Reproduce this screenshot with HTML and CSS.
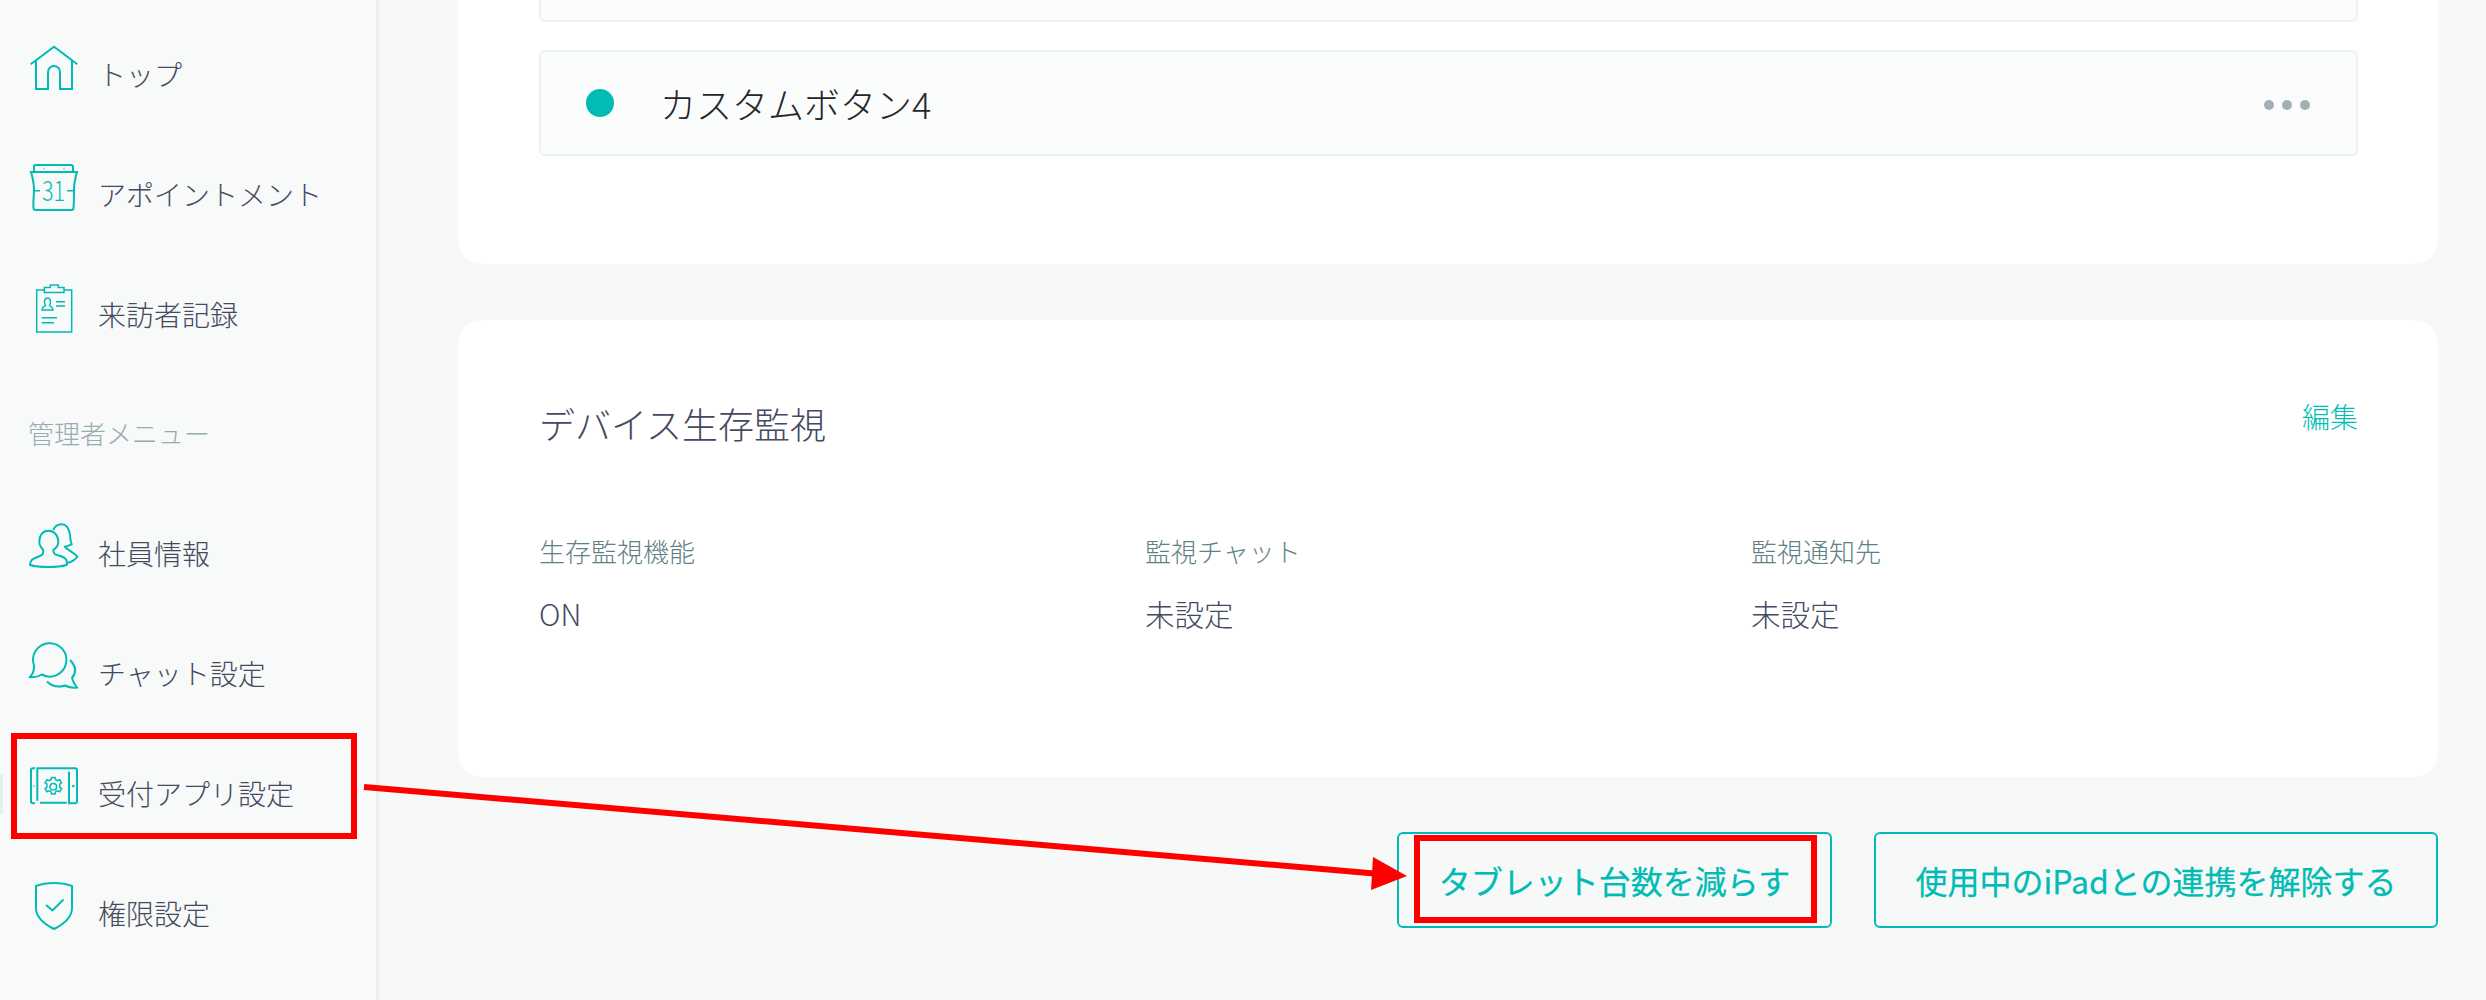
FILE: index.html
```html
<!DOCTYPE html>
<html lang="ja">
<head>
<meta charset="UTF-8">
<title>受付アプリ設定</title>
<link rel="stylesheet" href="styles.css">
</head>
<body>
<div class="page">
  <nav class="sidebar">
    <a class="nav-item">
      <svg class="nav-icon" viewBox="0 0 48 48"><path d="M.7 17.300 24-.3l23.300 17.600M6 14v28h12V25a6 6 0 0 1 12 0v17h12V14"/></svg>
      <span>トップ</span>
    </a>
    <a class="nav-item">
      <svg class="nav-icon" viewBox="0 0 48 48"><path d="M4 5V0a2 2 0 0 1 2-2h35a2 2 0 0 1 2 2v5"/><path d="M1 5h46c-2 7-3 13-3 18 0 6 0 12-.5 18a2 2 0 0 1-2 2H5.500a2 2 0 0 1-2-2C3 35 4 29 4 23 4 18 3 12 1 5Z"/><path class="thin" d="M3.500 23.700H10M37 23.700h6.500M13.500 1.500h1M33.500 1.500h1"/><text class="icon-num" x="23.500" y="34" textLength="23" lengthAdjust="spacingAndGlyphs">31</text></svg>
      <span>アポイントメント</span>
    </a>
    <a class="nav-item">
      <svg class="nav-icon" viewBox="0 0 48 48"><path class="thin" d="M14.300 3H6.700v42h35V3H34M14.300 .5h6V-2h8V.5H34v5H14.300z"/><path class="thin" d="M12 23h11c0-3-2.500-3.500-3.500-4.500 2-3 1-7.500-2-7.500s-4 4.500-2 7.500c-1 1-3.500 1.500-3.500 4.500ZM26 14.700h9M26 19h9M11.700 30.700H27M11.700 35.700H24"/></svg>
      <span>来訪者記録</span>
    </a>
    <div class="nav-heading">管理者メニュー</div>
    <a class="nav-item">
      <svg class="nav-icon" viewBox="0 0 48 48"><path d="M13.300 24c-2-2-4-5-4-8.500C9.300 9 13 4.700 18.300 4.700S28.300 9 28.300 15.500c0 3.500-2 6.500-5 8.500 0 2 .7 3.500 1.700 4.300 4 1.700 10 2 11.500 6 .7 1.700.5 3.500.2 4.700-5 1.500-11 2-18.400 2S5 40.500 0 39c.2-2 .5-3.500 1.700-5 3-2.500 8-3 11-5.700.6-1.300.6-2.800.6-4.300Z"/><path d="M23.300 4c1.500-3.500 5-5.700 8.400-5.700 4.300 0 7.300 4 8.300 10.700.3 4 .5 7 1.700 9.300-1.800 1.500-4.700 1.700-6.700 2.400 1 2.800 9 5 12.300 10-2 3-6 5.300-10.600 6.600"/></svg>
      <span>社員情報</span>
    </a>
    <a class="nav-item">
      <svg class="nav-icon" viewBox="0 0 48 48"><path d="M4.200 20A16.700 16.700 0 1 1 11.700 28.500C8 31 4 31.500 0 31c2-2 4-5 4.200-11Z"/><path d="M40 14c6 6 7 12 2 18 1 4 3 7 5 9.500-4 .5-8 0-12-2-6 2-13 1-18-4"/></svg>
      <span>チャット設定</span>
    </a>
    <a class="nav-item active">
      <svg class="nav-icon" viewBox="0 0 48 48"><path d="M5 2.300H3a2 2 0 0 0-2 2v31a2 2 0 0 0 2 2h2M7.300 34.700V2.300H45a2 2 0 0 1 2 2v31a2 2 0 0 1-2 2h-6V5.700M10 36.700h26.700"/><circle class="fill" cx="43.300" cy="20" r="1.300"/><circle class="fill" cx="4" cy="20" r=".8"/><circle class="thin" cx="23.300" cy="20.700" r="3.300"/><path class="thin" d="M21.500 11.500h3.600l.5 2.200 1.800.9 2.200-1 1.900 3.200-1.800 1.400v3l1.800 1.400-1.900 3.200-2.200-1-1.800.9-.5 2.200h-3.600l-.5-2.200-1.800-.9-2.200 1-1.900-3.200 1.800-1.400v-3l-1.800-1.400 1.900-3.200 2.200 1 1.800-.9z"/></svg>
      <span>受付アプリ設定</span>
    </a>
    <a class="nav-item">
      <svg class="nav-icon" viewBox="0 0 48 48"><path d="M24-3c6.500 0 13 1 18 3v22c0 9-8 16-18 21C14 38 6 31 6 22V0c5-2 11.500-3 18-3Z"/><path d="m16 19 6.500 5.500 11-11"/></svg>
      <span>権限設定</span>
    </a>
  </nav>

  <main class="content">
    <section class="card card-top">
      <div class="custom-row custom-row-cut"></div>
      <div class="custom-row">
        <span class="dot"></span>
        <span class="custom-name">カスタムボタン4</span>
        <span class="more"><i></i><i></i><i></i></span>
      </div>
    </section>

    <section class="card card-monitor">
      <div class="card-head">
        <h2>デバイス生存監視</h2>
        <a class="edit">編集</a>
      </div>
      <div class="fields">
        <div><div class="field-label">生存監視機能</div><div class="field-value">ON</div></div>
        <div><div class="field-label">監視チャット</div><div class="field-value">未設定</div></div>
        <div><div class="field-label">監視通知先</div><div class="field-value">未設定</div></div>
      </div>
    </section>

    <div class="actions">
      <button class="btn btn-reduce">タブレット台数を減らす</button>
      <button class="btn btn-unlink">使用中のiPadとの連携を解除する</button>
    </div>
  </main>
</div>

<!-- annotations drawn over the screenshot -->
<svg class="markup" width="2486" height="1000" viewBox="0 0 2486 1000">
  <rect x="14" y="736" width="340" height="100"/>
  <rect x="1417" y="838" width="397" height="82"/>
  <path d="M364 787 1380 874"/>
  <polygon points="1407,876 1373,857 1371,890"/>
</svg>
</body>
</html>
```

FILE: styles.css
```css
* {
  box-sizing: border-box;
}
html, body {
  margin: 0;
  height: 1000px;
  overflow: hidden;
}
body {
  font-family: "Noto Sans CJK JP", "Noto Sans", sans-serif;
  font-weight: 300;
  background: #f7f8f8;
  color: #444a60;
}
.page {
  display: flex;
  height: 1000px;
}

/* sidebar */
.sidebar {
  width: 379px;
  flex-shrink: 0;
  padding-top: 15px;
  background: #f8f9f9;
  border-right: 3px solid #eceeee;
}
.nav-item {
  position: relative;
  display: flex;
  height: 120px;
  padding: 32px 0 0 30px;
  gap: 20px;
  font-size: 28px;
  line-height: 40px;
}
.nav-item span {
  padding-top: 7px;
}
.nav-item.active::before {
  content: "";
  position: absolute;
  left: 0;
  top: 40px;
  width: 3px;
  height: 40px;
  background: #dff4f2;
}
.nav-icon {
  width: 48px;
  height: 48px;
  flex-shrink: 0;
  overflow: visible;
  fill: none;
  stroke: #00bcb4;
  stroke-width: 2;
}
.nav-icon .thin {
  stroke-width: 1.500;
}
.nav-icon .fill {
  fill: #00bcb4;
  stroke: none;
}
.icon-num {
  fill: #00bcb4;
  stroke: none;
  font-size: 27px;
  font-weight: 300;
  text-anchor: middle;
}
.nav-heading {
  height: 119px;
  padding: 38px 0 0 28px;
  font-size: 26px;
  line-height: 40px;
  color: #97acb1;
}

/* main column */
.content {
  flex: 1;
  padding: 0 48px 0 79px;
}
.card {
  background: #fff;
  border-radius: 24px;
}
.card-top {
  height: 264px;
  padding: 0 80px 0 81px;
  border-radius: 0 0 24px 24px;
}
.custom-row {
  display: flex;
  align-items: center;
  height: 106px;
  padding: 0 46px 0 45px;
  background: #fbfcfc;
  border: 2px solid #e8f4f1;
  border-radius: 6px;
}
.custom-row-cut {
  height: 22px;
  margin-bottom: 28px;
  border-top: 0;
  border-radius: 0 0 6px 6px;
}
.dot {
  width: 28px;
  height: 28px;
  border-radius: 50%;
  background: #00bcb4;
}
.custom-name {
  flex: 1;
  margin-left: 46px;
  font-size: 36px;
  color: #26272b;
}
.more {
  display: flex;
  gap: 8px;
  margin-top: 4px;
}
.more i {
  width: 10px;
  height: 10px;
  border-radius: 50%;
  background: #a0b0b4;
}
.card-monitor {
  height: 457px;
  margin-top: 56px;
  padding: 75px 80px 0 81px;
}
.card-head {
  display: flex;
  justify-content: space-between;
  align-items: flex-start;
}
.card-head h2 {
  margin: 0;
  font-size: 36px;
  font-weight: 300;
  line-height: 56px;
  color: #444a60;
}
.edit {
  margin-top: 1px;
  font-size: 28px;
  line-height: 40px;
  color: #00bcb4;
}
.fields {
  display: grid;
  grid-template-columns: 606px 606px 1fr;
  margin-top: 80px;
}
.field-label {
  font-size: 26px;
  line-height: 40px;
  color: #5f8186;
}
.field-value {
  margin-top: 22px;
  font-size: 29.500px;
  line-height: 40px;
  color: #444a60;
}
.actions {
  display: flex;
  justify-content: flex-end;
  gap: 42px;
  margin-top: 55px;
}
.btn {
  height: 96px;
  padding: 0;
  background: transparent;
  border: 2px solid #00bcb4;
  border-radius: 6px;
  font-family: inherit;
  font-size: 32px;
  font-weight: 400;
  -webkit-text-stroke: 0.25px #00bcb4;
  color: #00bcb4;
}
.btn-reduce {
  width: 435px;
}
.btn-unlink {
  width: 564px;
}

/* red annotations */
.markup {
  position: absolute;
  top: 0;
  left: 0;
}
.markup rect {
  fill: none;
  stroke: #ff0000;
  stroke-width: 6;
}
.markup path {
  fill: none;
  stroke: #ff0000;
  stroke-width: 6;
}
.markup polygon {
  fill: #ff0000;
}
```
